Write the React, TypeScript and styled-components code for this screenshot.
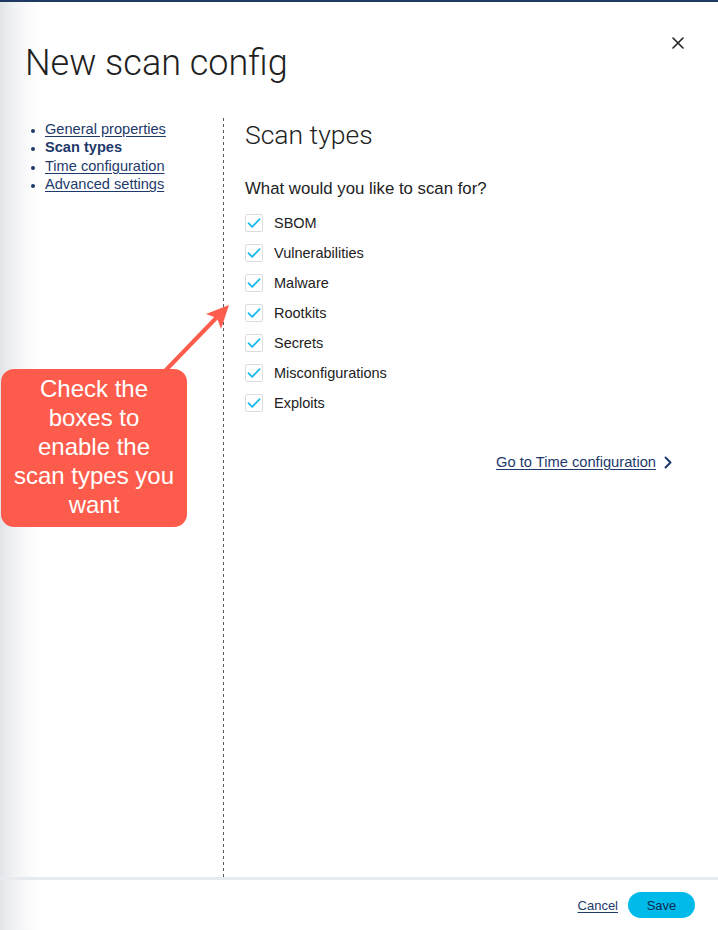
import React from "react";
import styled, { createGlobalStyle } from "styled-components";

const GlobalStyle = createGlobalStyle`
  html, body { margin: 0; padding: 0; background: #fff; }
  body { font-family: "Liberation Sans", Arial, sans-serif; color: #222; }
  * { box-sizing: border-box; }
`;

const Page = styled.div`
  position: relative;
  width: 718px;
  height: 930px;
  display: flex;
  flex-direction: column;
  border-top: 2px solid #1f3a60;
  background: linear-gradient(to right, #e3e4e8 0px, #f1f2f4 14px, #fbfbfc 30px, #ffffff 42px);
  overflow: hidden;
`;

const Header = styled.header`
  display: flex;
  justify-content: space-between;
  align-items: flex-start;
  padding: 40px 32px 0 25px;
  height: 116px;
`;

const Title = styled.h1`
  margin: 0;
  font-family: "Roboto", "Liberation Sans", sans-serif;
  font-weight: 300;
  font-size: 36px;
  line-height: 42px;
  color: #1f1f1f;
`;

const CloseButton = styled.button`
  margin-top: -7px;
  width: 16px;
  height: 16px;
  padding: 0;
  border: none;
  background: none;
  display: flex;
  align-items: center;
  justify-content: center;
  cursor: pointer;
`;

const Body = styled.div`
  flex: 1;
  display: grid;
  grid-template-columns: 198px 1px 1fr;
  padding-left: 25px;
`;

const Nav = styled.ul`
  margin: 0;
  padding: 2px 0 0 20px;
  list-style: disc;
  color: #1d3a6b;
  font-size: 14.6px;
  line-height: 18.4px;
`;

const NavItem = styled.li<{ $active?: boolean }>`
  font-weight: ${(p) => (p.$active ? 700 : 400)};
  text-decoration: ${(p) => (p.$active ? "none" : "underline")};
  text-underline-offset: 2px;
  &::marker { font-size: 12px; }
`;

const Divider = styled.div`
  background-image: linear-gradient(to bottom, #5a5a5a 50%, transparent 50%);
  background-size: 1px 6px;
  background-repeat: repeat-y;
`;

const Content = styled.section`
  padding: 2px 46px 0 21px;
  display: flex;
  flex-direction: column;
`;

const SectionTitle = styled.h2`
  margin: 0;
  font-family: "Roboto", "Liberation Sans", sans-serif;
  font-weight: 300;
  font-size: 26.5px;
  line-height: 30px;
  color: #222;
`;

const Question = styled.p`
  margin: 29px 0 0;
  font-size: 16.8px;
  line-height: 20px;
  color: #222;
`;

const OptionList = styled.div`
  margin-top: 9px;
  display: flex;
  flex-direction: column;
`;

const OptionRow = styled.label`
  display: flex;
  align-items: center;
  height: 30px;
  gap: 11px;
  font-size: 14.5px;
  color: #222;
`;

const Box = styled.span`
  width: 18px;
  height: 18px;
  border: 1px solid #dcdcdc;
  border-radius: 2px;
  background: #fff;
  display: flex;
  align-items: center;
  justify-content: center;
`;

const NextRow = styled.div`
  margin-top: 34px;
  display: flex;
  justify-content: flex-end;
  align-items: center;
  gap: 8px;
  color: #1d3a6b;
  font-size: 14.7px;
  line-height: 20px;
`;

const LinkText = styled.a`
  color: inherit;
  text-decoration: underline;
  text-underline-offset: 2px;
`;

const Footer = styled.footer`
  height: 53px;
  border-top: 3px solid #e7eaee;
  display: flex;
  justify-content: flex-end;
  align-items: center;
  gap: 10px;
  padding-right: 23px;
`;

const CancelLink = styled.a`
  color: #1d3a6b;
  font-size: 13px;
  text-decoration: underline;
  text-underline-offset: 2px;
`;

const SaveButton = styled.button`
  width: 67px;
  height: 26px;
  border: none;
  border-radius: 13px;
  background: #00bbea;
  color: #0d2a52;
  font-family: "Liberation Sans", Arial, sans-serif;
  font-size: 13px;
  cursor: pointer;
`;

const Callout = styled.div`
  position: absolute;
  left: 1px;
  top: 367px;
  width: 186px;
  height: 158px;
  padding-bottom: 4px;
  border-radius: 13px;
  background: #fd5c4c;
  color: #fff;
  font-family: "Liberation Sans", Arial, sans-serif;
  font-size: 24px;
  line-height: 29px;
  text-align: center;
  display: flex;
  align-items: center;
  justify-content: center;
`;

const Arrow = styled.svg`
  position: absolute;
  left: 150px;
  top: 296px;
`;

const options = [
  "SBOM",
  "Vulnerabilities",
  "Malware",
  "Rootkits",
  "Secrets",
  "Misconfigurations",
  "Exploits",
];

const Check = () => (
  <svg width="14" height="12" viewBox="0 0 14 12">
    <path d="M1.5 6.2 L5.2 9.8 L12.6 2.2" fill="none" stroke="#1bb8ec" strokeWidth="1.8" strokeLinecap="round" strokeLinejoin="round" />
  </svg>
);

export default function App() {
  return (
    <>
      <GlobalStyle />
      <Page>
        <Header>
          <Title>New scan config</Title>
          <CloseButton aria-label="Close">
            <svg width="12" height="12" viewBox="0 0 12 12">
              <path d="M1 1 L11 11 M11 1 L1 11" stroke="#222" strokeWidth="1.6" strokeLinecap="round" />
            </svg>
          </CloseButton>
        </Header>
        <Body>
          <Nav>
            <NavItem>General properties</NavItem>
            <NavItem $active>Scan types</NavItem>
            <NavItem>Time configuration</NavItem>
            <NavItem>Advanced settings</NavItem>
          </Nav>
          <Divider />
          <Content>
            <SectionTitle>Scan types</SectionTitle>
            <Question>What would you like to scan for?</Question>
            <OptionList>
              {options.map((o) => (
                <OptionRow key={o}>
                  <Box>
                    <Check />
                  </Box>
                  {o}
                </OptionRow>
              ))}
            </OptionList>
            <NextRow>
              <LinkText>Go to Time configuration</LinkText>
              <svg width="8" height="13" viewBox="0 0 8 13">
                <path d="M1.5 1.5 L6.5 6.5 L1.5 11.5" fill="none" stroke="#1d3a6b" strokeWidth="2" strokeLinecap="round" strokeLinejoin="round" />
              </svg>
            </NextRow>
          </Content>
        </Body>
        <Footer>
          <CancelLink>Cancel</CancelLink>
          <SaveButton>Save</SaveButton>
        </Footer>
        <Arrow width="84" height="80" viewBox="0 0 84 80">
          <path d="M14 74 L70 16" stroke="#fd5c4c" strokeWidth="4" strokeLinecap="round" />
          <path d="M79 7 L56 16 L67 20 L71 31 Z" fill="#fd5c4c" />
        </Arrow>
        <Callout>
          Check the
          <br />
          boxes to
          <br />
          enable the
          <br />
          scan types you
          <br />
          want
        </Callout>
      </Page>
    </>
  );
}
